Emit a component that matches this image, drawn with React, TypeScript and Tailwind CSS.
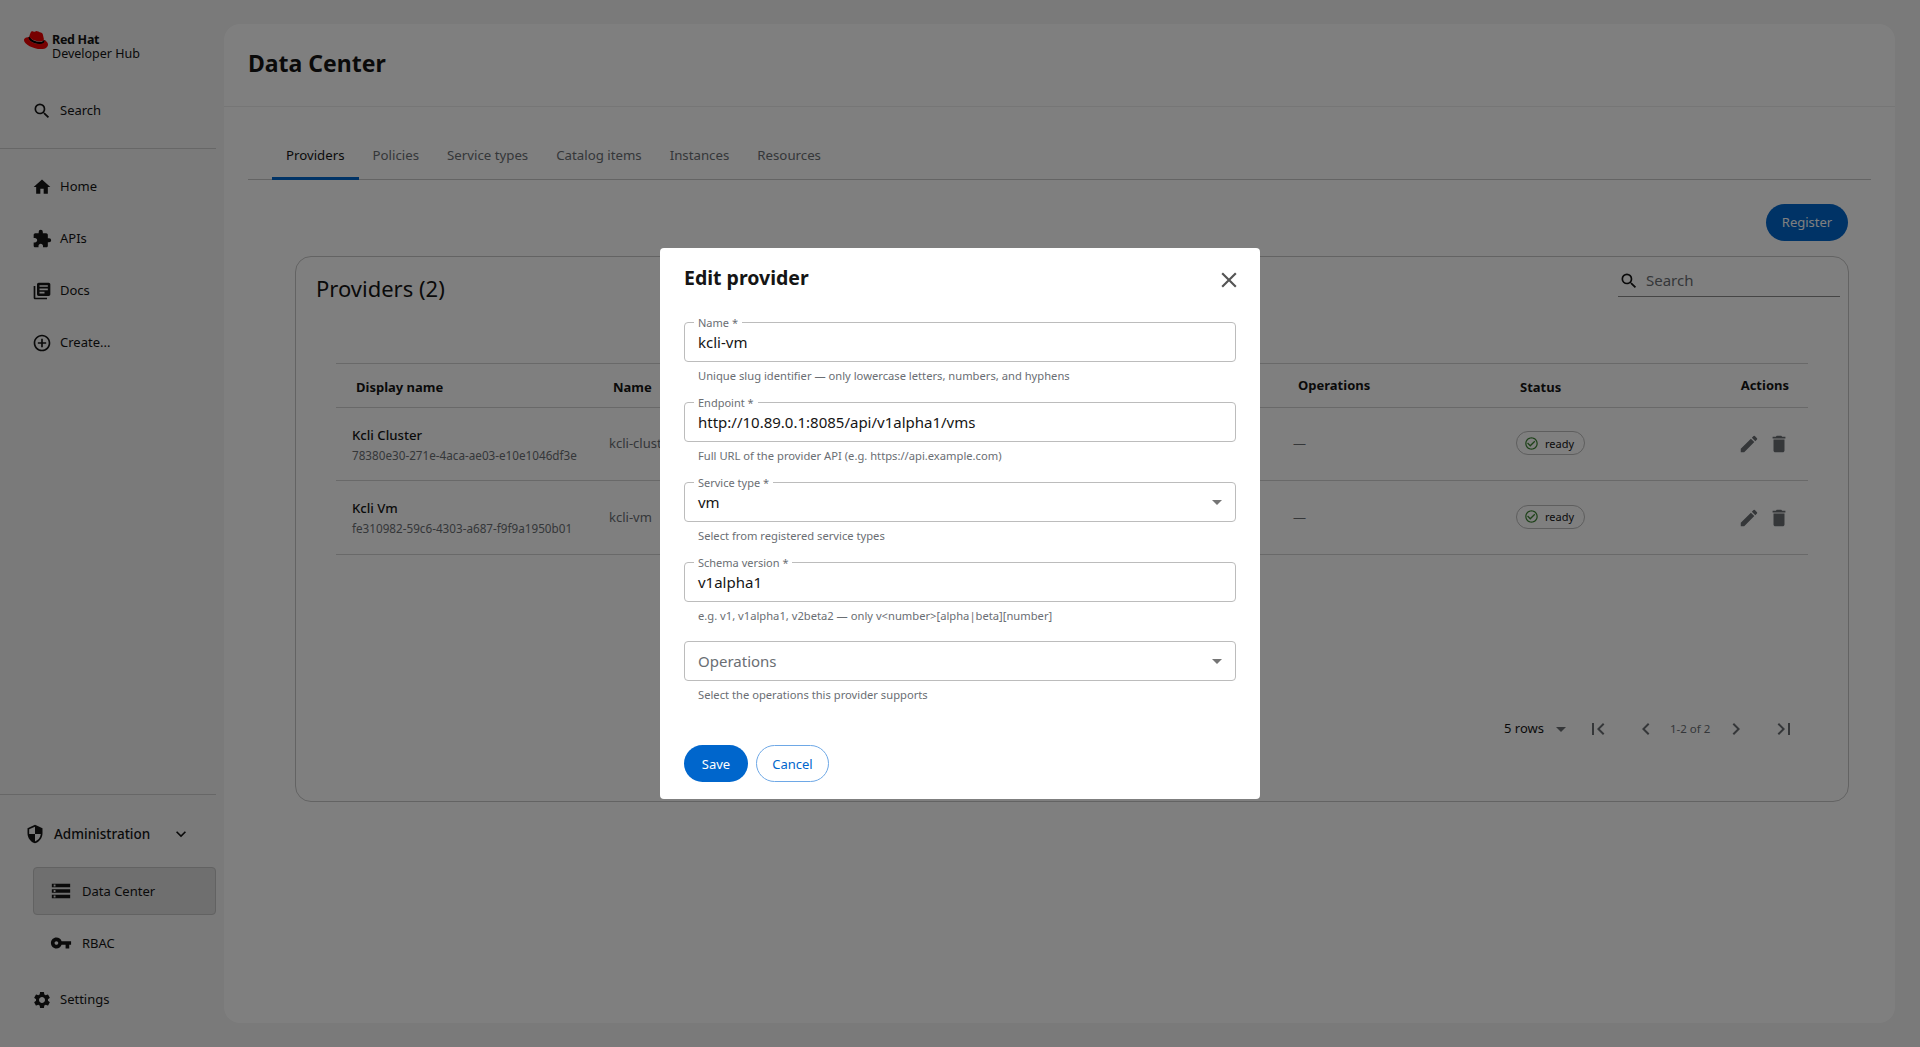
import type { ReactNode } from "react";
import {
  MdAddCircleOutline,
  MdArrowDropDown,
  MdCheckCircleOutline,
  MdChevronLeft,
  MdChevronRight,
  MdClose,
  MdDelete,
  MdEdit,
  MdExpandMore,
  MdExtension,
  MdFirstPage,
  MdHome,
  MdLastPage,
  MdLibraryBooks,
  MdSearch,
  MdSecurity,
  MdSettings,
  MdStorage,
  MdVpnKey,
} from "react-icons/md";

const tabs = ["Providers", "Policies", "Service types", "Catalog items", "Instances", "Resources"];

const providers = [
  { title: "Kcli Cluster", id: "78380e30-271e-4aca-ae03-e10e1046df3e", name: "kcli-cluster", rowHeight: "h-[73px]" },
  { title: "Kcli Vm", id: "fe310982-59c6-4303-a687-f9f9a1950b01", name: "kcli-vm", rowHeight: "h-[74px]" },
];

function RedHatLogo() {
  return (
    <svg viewBox="0 0 24 24" className="h-[24px] w-[24px] shrink-0">
      <path d="M4.5 9.2C6.5 12.5 11 15 16 15c2.5 0 4.2-.8 4.2-2.8" fill="none" stroke="#000" strokeWidth="2.4" />
      <path
        fill="#e00"
        d="M16.009 13.386c1.577 0 3.86-.326 3.86-2.202a1.765 1.765 0 0 0-.04-.431l-.94-4.08c-.216-.898-.406-1.305-1.982-2.093-1.223-.625-3.888-1.658-4.676-1.658-.733 0-.947.946-1.822.946-.842 0-1.467-.706-2.255-.706-.757 0-1.25.515-1.63 1.576 0 0-1.06 2.99-1.197 3.424a.81.81 0 0 0-.028.245c0 1.162 4.577 4.974 10.71 4.974m4.101-1.435c.218 1.032.218 1.14.218 1.277 0 1.765-1.984 2.745-4.593 2.745-5.895.004-11.06-3.451-11.06-5.734a2.326 2.326 0 0 1 .19-.925C2.746 9.415 0 9.794 0 12.217c0 3.969 9.405 8.861 16.851 8.861 5.71 0 7.149-2.582 7.149-4.62 0-1.605-1.387-3.425-3.887-4.512"
      />
    </svg>
  );
}

function NavItem({ icon, label }: { icon: ReactNode; label: string }) {
  return (
    <div className="flex h-[48px] items-center gap-[8px] pl-[32px] text-[13px] text-[#151515]">
      <span className="text-[20px] text-[#151515]">{icon}</span>
      <span>{label}</span>
    </div>
  );
}

function Sidebar() {
  return (
    <aside className="flex h-full w-[224px] shrink-0 flex-col">
      <div className="w-[216px] border-b border-[#cfcfcf] pt-[28px] pb-[13px]">
        <div className="flex h-[34px] items-start pl-[24px]">
          <RedHatLogo />
          <div className="ml-[4px] mt-[5px] text-[12.5px] leading-[14px] text-[#151515]">
            <div className="font-bold tracking-[-0.3px]">Red Hat</div>
            <div className="whitespace-nowrap">Developer Hub</div>
          </div>
        </div>
        <div className="mt-[25px]">
          <NavItem icon={<MdSearch />} label="Search" />
        </div>
      </div>

      <nav className="mt-[14px] flex flex-col gap-[4px]">
        <NavItem icon={<MdHome />} label="Home" />
        <NavItem icon={<MdExtension />} label="APIs" />
        <NavItem icon={<MdLibraryBooks />} label="Docs" />
        <NavItem icon={<MdAddCircleOutline />} label="Create..." />
      </nav>

      <div className="mt-auto w-[216px] border-t border-[#cfcfcf] pt-[15px] pb-[23px]">
        <div className="flex h-[48px] items-center pl-[25px] text-[13.5px] font-medium text-[#151515]">
          <MdSecurity className="text-[20px]" />
          <span className="ml-[9px] w-[117px] pt-[1px]">Administration</span>
          <MdExpandMore className="text-[20px]" />
        </div>
        <div className="ml-[33px] mt-[9px] flex h-[48px] items-center rounded-[4px] border border-[#c4c4c4] bg-[#dedede] pl-[16px] text-[13px] text-[#151515]">
          <MdStorage className="text-[22px]" />
          <span className="ml-[10px] pt-[2px]">Data Center</span>
        </div>
        <div className="ml-[32px] mt-[4px] flex h-[48px] items-center pl-[18px] text-[13px] text-[#151515]">
          <MdVpnKey className="text-[22px]" />
          <span className="ml-[10px] pt-[2px]">RBAC</span>
        </div>
        <div className="mt-[9px]">
          <NavItem icon={<MdSettings />} label="Settings" />
        </div>
      </div>
    </aside>
  );
}

function ProvidersTable() {
  return (
    <div className="mx-[40px] mt-[42px] border-t border-[#d2d2d2]">
      <div className="grid h-[44px] grid-cols-[261px_685px_222px_196px_108px] items-center border-b border-[#d2d2d2] text-[13px] font-bold text-[#151515]">
        <div className="pl-[20px] pt-[4px]">Display name</div>
        <div className="pl-[16px] pt-[4px]">Name</div>
        <div className="pl-[16px]">Operations</div>
        <div className="pl-[16px] pt-[4px]">Status</div>
        <div className="pr-[19px] text-right">Actions</div>
      </div>
      {providers.map((p) => (
        <div
          key={p.id}
          className={`grid grid-cols-[261px_685px_222px_196px_108px] items-center border-b border-[#d2d2d2] ${p.rowHeight}`}
        >
          <div className="pl-[16px]">
            <div className="text-[13.2px] font-medium leading-[18px] text-[#151515]">{p.title}</div>
            <div className="mt-[3px] whitespace-nowrap text-[11.7px] leading-[16px] text-[#6a6e73]">{p.id}</div>
          </div>
          <div className="pl-[12px] text-[13px] text-[#6a6e73]">{p.name}</div>
          <div className="pl-[11px] text-[13px] text-[#6a6e73]">—</div>
          <div className="pl-[12px]">
            <span className="inline-flex h-[24px] w-[69px] items-center rounded-full border border-[#bcbcbc] pl-[7px] text-[11px] text-[#151515]">
              <MdCheckCircleOutline className="text-[15px] text-[#3e8635]" />
              <span className="ml-[6px] pt-[1px]">ready</span>
            </span>
          </div>
          <div className="flex justify-end gap-[8px] pr-[18px] text-[22px] text-[#6a6e73]">
            <MdEdit />
            <MdDelete />
          </div>
        </div>
      ))}
    </div>
  );
}

function Pagination() {
  return (
    <div className="mx-[40px] mt-[154px] flex h-[40px] items-center justify-end pr-[12px] text-[#6a6e73]">
      <span className="text-[13px] text-[#151515]">5 rows</span>
      <MdArrowDropDown className="ml-[5px] text-[24px]" />
      <MdFirstPage className="ml-[13px] text-[24px]" />
      <MdChevronLeft className="ml-[24px] text-[24px]" />
      <span className="ml-[12px] w-[41px] whitespace-nowrap text-[11.5px]">1-2 of 2</span>
      <MdChevronRight className="ml-[13px] text-[24px]" />
      <MdLastPage className="ml-[24px] text-[24px]" />
    </div>
  );
}

function MainPanel() {
  return (
    <main className="my-[24px] mr-[25px] flex-1 rounded-2xl bg-white">
      <div className="flex h-[83px] items-center border-b border-[#ececec] px-[24px] pb-[4px]">
        <h1 className="text-[23px] font-bold text-[#151515]">Data Center</h1>
      </div>

      <div className="mx-[24px] mt-[25px] flex h-[48px] border-b border-[#c9c9c9] pl-[24px]">
        {tabs.map((tab, i) => (
          <div
            key={tab}
            className={`flex h-[48px] items-center border-b-[3px] px-[14px] pt-[3px] text-[13.25px] ${
              i === 0 ? "border-[#0066cc] text-[#151515]" : "border-transparent text-[#6a6e73]"
            }`}
          >
            {tab}
          </div>
        ))}
      </div>

      <div className="mr-[47px] mt-[24px] flex justify-end">
        <button className="h-[37px] w-[82px] rounded-full bg-[#0066cc] pt-[1px] text-[13px] text-white">Register</button>
      </div>

      <section className="ml-[71px] mr-[46px] mt-[15px] h-[546px] rounded-2xl border border-[#c6c6c6]">
        <div className="flex h-[64px] items-start justify-between pl-[20px] pr-[8px]">
          <h2 className="mt-[14px] text-[22px] leading-[34px] text-[#151515]">Providers (2)</h2>
          <div className="mt-[8px] flex h-[32px] w-[222px] items-center border-b border-[#8a8a8a] pl-[1px] text-[15px] text-[#6a6e73]">
            <MdSearch className="text-[20px] text-[#151515]" />
            <span className="ml-[7px]">Search</span>
          </div>
        </div>
        <ProvidersTable />
        <Pagination />
      </section>
    </main>
  );
}

function Field({ label, value, helper, select, placeholder, className }: {
  label?: string;
  value: string;
  helper: string;
  select?: boolean;
  placeholder?: boolean;
  className?: string;
}) {
  return (
    <div className={className}>
      <div className="relative flex h-[40px] items-center rounded-[4px] border border-[#bcbcbc] pl-[13px] pr-[6px]">
        {label && (
          <span className="absolute left-[9px] top-[-7px] bg-white px-[4px] text-[11px] leading-[14px] text-[#6a6e73]">
            {label}
          </span>
        )}
        <span className={`flex-1 text-[15px] ${placeholder ? "pt-[1px] text-[#6a6e73]" : "text-[#151515]"}`}>{value}</span>
        {select && <MdArrowDropDown className="text-[24px] text-[#757575]" />}
      </div>
      <p className="mt-[6px] pl-[14px] text-[11.2px] leading-[16px] text-[#6a6e73]">{helper}</p>
    </div>
  );
}

function EditProviderDialog() {
  return (
    <div className="fixed inset-0 flex items-center justify-center bg-black/50">
      <div className="h-[551px] w-[600px] rounded-[4px] bg-white px-[24px]">
        <div className="flex h-[60px] items-center justify-between">
          <h2 className="text-[19.5px] font-bold text-[#151515]">Edit provider</h2>
          <MdClose className="mr-[-6px] mt-[3px] text-[26px] text-[#555]" />
        </div>
        <div className="mt-[14px] flex flex-col gap-[18px]">
          <Field label="Name *" value="kcli-vm" helper="Unique slug identifier — only lowercase letters, numbers, and hyphens" />
          <Field
            label="Endpoint *"
            value="http://10.89.0.1:8085/api/v1alpha1/vms"
            helper="Full URL of the provider API (e.g. https://api.example.com)"
          />
          <Field label="Service type *" value="vm" helper="Select from registered service types" select />
          <Field
            label="Schema version *"
            value="v1alpha1"
            helper="e.g. v1, v1alpha1, v2beta2 — only v<number>[alpha|beta][number]"
          />
          <Field className="mt-[-1px]" value="Operations" helper="Select the operations this provider supports" select placeholder />
        </div>
        <div className="mt-[42px] flex gap-[8px]">
          <button className="h-[37px] w-[64px] rounded-full bg-[#0066cc] pt-[2px] text-[13px] text-white">Save</button>
          <button className="h-[37px] w-[73px] rounded-full border border-[#6ea8e6] pt-[2px] text-[13px] text-[#0066cc]">
            Cancel
          </button>
        </div>
      </div>
    </div>
  );
}

export default function App() {
  return (
    <div className="relative flex h-[1047px] overflow-hidden bg-[#f4f4f4] font-['Noto_Sans',sans-serif]">
      <Sidebar />
      <MainPanel />
      <EditProviderDialog />
    </div>
  );
}
